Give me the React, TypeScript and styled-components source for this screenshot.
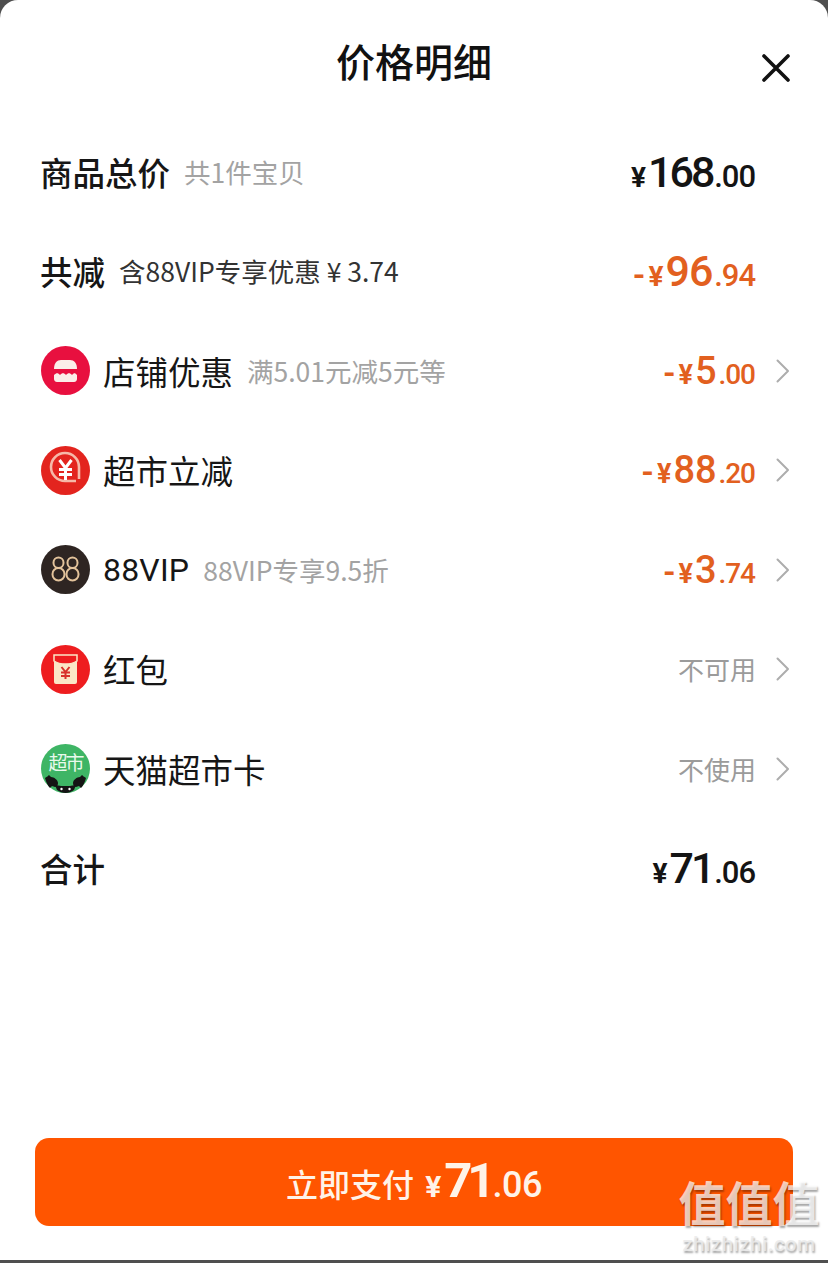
import React from "react";
import styled, { createGlobalStyle } from "styled-components";

const Global = createGlobalStyle`
  html, body { margin: 0; padding: 0; background: #4a4a4a; }
  body { font-family: "Noto Sans CJK SC", "Noto Sans", sans-serif; }
  #root { width: 828px; height: 1263px; overflow: hidden; }
`;

const Page = styled.div`
  width: 828px;
  height: 1263px;
  background: #4f4f4f;
  position: relative;
  overflow: hidden;
`;
const Sheet = styled.div`
  height: 1260px;
  background: #fff;
  border-radius: 18px 18px 0 0;
  display: flex;
  flex-direction: column;
  box-sizing: border-box;
  padding-top: 1px;
`;
const Header = styled.header`
  height: 121px;
  flex: none;
  display: flex;
  justify-content: center;
  padding-top: 31px;
  box-sizing: border-box;
  position: relative;
`;
const Title = styled.h1`
  margin: 0;
  font-size: 39px;
  line-height: 56px;
  font-weight: 500;
  color: #111;
`;
const Close = styled.button`
  position: absolute;
  right: 37px;
  top: 52px;
  width: 30px;
  height: 30px;
  padding: 0;
  border: 0;
  background: none;
  display: block;
`;
const List = styled.div`
  display: flex;
  flex-direction: column;
  flex: none;
`;
const Row = styled.div`
  height: 99.5px;
  flex: none;
  box-sizing: border-box;
  padding: 0 38px 0 40px;
  display: flex;
  align-items: center;
`;
const IconWrap = styled.span`
  width: 49px;
  height: 49px;
  flex: none;
  margin: 0 13px 0 1px;
  display: block;
  svg { display: block; }
`;
const Label = styled.span<{ $bold?: boolean }>`
  font-size: 32.5px;
  line-height: 44px;
  font-weight: ${(p) => (p.$bold ? 500 : 400)};
  color: #161616;
  white-space: nowrap;
`;
const LatinLabel = styled(Label)`
  font-family: "Roboto", "Noto Sans CJK SC", sans-serif;
  font-size: 32px;
  letter-spacing: 0.2px;
`;
const Note = styled.span<{ $dark?: boolean }>`
  font-size: 26.5px;
  line-height: 36px;
  color: ${(p) => (p.$dark ? "#333" : "#a3a3a3")};
  margin-left: 14px;
  white-space: nowrap;
`;
const Right = styled.div`
  margin-left: auto;
  display: flex;
  align-items: center;
  justify-content: flex-end;
`;
const Price = styled.div<{ $accent?: boolean }>`
  width: 200px;
  margin-right: 34px;
  display: flex;
  justify-content: flex-end;
  align-items: baseline;
  font-family: "Roboto", "Open Sans", sans-serif;
  color: ${(p) => (p.$accent ? "#e2601f" : "#141414")};
  white-space: nowrap;
`;
const Minus = styled.span`
  font-size: 32px;
  font-weight: 700;
  margin-right: 3px;
`;
const Sign = styled.span<{ $size: number }>`
  font-size: ${(p) => p.$size}px;
  font-weight: 700;
  margin-right: 2px;
`;
const Main = styled.span<{ $size: number; $tight: number }>`
  font-size: ${(p) => p.$size}px;
  font-weight: 500;
  letter-spacing: ${(p) => p.$tight}px;
`;
const Cents = styled.span<{ $size: number }>`
  font-size: ${(p) => p.$size}px;
  font-weight: 500;
  letter-spacing: -1.1px;
  padding-right: 1.1px;
  margin-left: 2px;
`;
const Status = styled.span`
  font-size: 26px;
  line-height: 36px;
  color: #9b9b9b;
  margin-right: 20px;
`;
const Chevron = styled.svg`
  display: block;
  flex: none;
  width: 14px;
  height: 26px;
`;
const ChevronSlot = styled.span`
  display: block;
  margin-left: -14px;
`;
const Spacer = styled.div`
  flex: 1;
`;
const PayButton = styled.button`
  margin: 0 35px 34px 35px;
  height: 88px;
  flex: none;
  border: 0;
  border-radius: 14px;
  background: #ff5500;
  color: #fff3e8;
  display: flex;
  align-items: baseline;
  justify-content: center;
  padding: 14px 0 0;
  box-sizing: border-box;
  font-family: "Noto Sans CJK SC", sans-serif;
`;
const PayLabel = styled.span`
  font-size: 32px;
  font-weight: 500;
  margin-right: 11px;
`;
const PayNum = styled.span<{ $size: number; $weight: number; $tight?: number; $gap?: number }>`
  font-family: "Roboto", sans-serif;
  font-size: ${(p) => p.$size}px;
  font-weight: ${(p) => p.$weight};
  letter-spacing: ${(p) => p.$tight ?? 0}px;
  margin-left: ${(p) => p.$gap ?? 0}px;
`;
const Watermark = styled.div`
  position: absolute;
  left: 677px;
  top: 1178px;
  width: 144px;
  text-align: center;
  color: rgba(255, 255, 255, 0.72);
  text-shadow: 1px 2px 2px rgba(0, 0, 0, 0.35);
`;
const MarkChars = styled.div`
  font-family: "Roboto", "Noto Sans CJK SC", sans-serif;
  font-size: 47px;
  line-height: 54px;
  font-weight: 700;
  white-space: nowrap;
`;
const MarkUrl = styled.div`
  font-family: "Roboto", sans-serif;
  font-size: 20.5px;
  line-height: 24px;
  letter-spacing: 0.5px;
  font-weight: 500;
  color: rgba(235, 235, 235, 0.85);
`;

const Arrow = () => (
  <Chevron viewBox="0 0 14 26">
    <path d="M1.500 2.500 L12 13 L1.500 23.500" fill="none" stroke="#adadad" strokeWidth="2" strokeLinecap="round" strokeLinejoin="round" />
  </Chevron>
);
const OverlayArrow = () => (
  <ChevronSlot><Arrow /></ChevronSlot>
);

const ShopIcon = () => (
  <svg width="49" height="49" viewBox="0 0 49 49">
    <circle cx="24.5" cy="24.5" r="24.5" fill="#e8103f" />
    <path d="M13 23c0-6 3-9 7-9h9c4 0 7 3 7 9z" fill="#fbeee9" />
    <path d="M13 29c2.500-2.500 4-2.500 6 0 2-2.500 4-2.500 6 0 2-2.500 4-2.500 6 0 2-2.500 3-2.500 5 0v4c0 1.500-1 3-3 3H16c-2 0-3-1.500-3-3z" fill="#fbeee9" />
  </svg>
);
const CutIcon = () => (
  <svg width="49" height="49" viewBox="0 0 49 49">
    <circle cx="24.5" cy="24.5" r="24.5" fill="#e3241e" />
    <path d="M35 35H24a14 14 0 1 1 14-14v12" fill="none" stroke="#f6b8a8" strokeWidth="2.600" />
    <path d="M18.500 14l6 8 6-8M18 23.500h13M18 28.500h13M24.500 22v12" fill="none" stroke="#fff" strokeWidth="3" />
  </svg>
);
const VipIcon = () => (
  <svg width="49" height="49" viewBox="0 0 49 49">
    <circle cx="24.5" cy="24.5" r="24.5" fill="#2e2522" />
    <g fill="none" stroke="#e3c39b" strokeWidth="2">
      <rect x="12.500" y="12.500" width="10" height="10.500" rx="5" />
      <rect x="11.500" y="23" width="12" height="12.500" rx="6" />
      <rect x="26.500" y="12.500" width="10" height="10.500" rx="5" />
      <rect x="25.500" y="23" width="12" height="12.500" rx="6" />
    </g>
  </svg>
);
const PacketIcon = () => (
  <svg width="49" height="49" viewBox="0 0 49 49">
    <circle cx="24.5" cy="24.5" r="24.5" fill="#ee1d1f" />
    <path d="M13 10h23v27a2 2 0 0 1-2 2H15a2 2 0 0 1-2-2z" fill="#fbe7c6" />
    <path d="M13 10h23v6c-6 4-17 4-23 0z" fill="#ee1d1f" stroke="#fbe7c6" strokeWidth="1.500" />
    <path d="M20.500 22l4 5 4-5M20 27.500h9M20 31h9M24.500 27v7" fill="none" stroke="#d8322a" strokeWidth="2" />
  </svg>
);
const CardIcon = () => (
  <svg width="49" height="49" viewBox="0 0 49 49">
    <circle cx="24.5" cy="24.5" r="24.5" fill="#3eb565" />
    <text x="24.5" y="26" textAnchor="middle" fontSize="19" letterSpacing="-2" fill="#e9f9ec" fontFamily="Noto Sans CJK SC, sans-serif">超市</text>
    <path d="M4 34c2-1 4-3 4-3l2 2c3 0 7 3 7 6 0 2-1 4-3 4l-3-1-2 2c-2-2-4-6-5-10z" fill="#141414" />
    <path d="M45 34c-2-1-4-3-4-3l-2 2c-3 0-7 3-7 6 0 2 1 4 3 4l3-1 2 2c2-2 4-6 5-10z" fill="#141414" />
    <path d="M14 41c2 0 5 1 6 1h9c1 0 4-1 6-1l-2 5c-3 2-5 3-8.500 3s-5.500-1-8.500-3z" fill="#141414" />
    <circle cx="20.500" cy="45" r="1.200" fill="#fff" />
    <circle cx="28.500" cy="45" r="1.200" fill="#fff" />
  </svg>
);

type MoneyProps = { minus?: boolean; main: string; cents: string; accent?: boolean; big?: boolean; tight?: number };
const Money = ({ minus, main, cents, accent, big, tight = 0 }: MoneyProps) => (
  <Price $accent={accent}>
    {minus && <Minus>-</Minus>}
    <Sign $size={big ? 28 : 27}>¥</Sign>
    <Main $size={big ? 43 : 38} $tight={tight}>{main}</Main>
    <Cents $size={big ? 31 : 28}>.{cents}</Cents>
  </Price>
);

export default function App() {
  return (
    <Page>
      <Global />
      <Sheet>
        <Header>
          <Title>价格明细</Title>
          <Close aria-label="关闭">
            <svg width="30" height="30" viewBox="0 0 30 30">
              <path d="M3 3 L27 27 M27 3 L3 27" stroke="#111" strokeWidth="3.600" strokeLinecap="round" />
            </svg>
          </Close>
        </Header>
        <List>
          <Row>
            <Label $bold>商品总价</Label>
            <Note>共1件宝贝</Note>
            <Right><Money main="168" cents="00" big tight={-3} /></Right>
          </Row>
          <Row>
            <Label $bold>共减</Label>
            <Note $dark>含88VIP专享优惠 ¥ 3.74</Note>
            <Right><Money minus main="96" cents="94" accent big tight={-1} /></Right>
          </Row>
          <Row>
            <IconWrap><ShopIcon /></IconWrap>
            <Label>店铺优惠</Label>
            <Note>满5.01元减5元等</Note>
            <Right><Money minus main="5" cents="00" accent /><OverlayArrow /></Right>
          </Row>
          <Row>
            <IconWrap><CutIcon /></IconWrap>
            <Label>超市立减</Label>
            <Right><Money minus main="88" cents="20" accent /><OverlayArrow /></Right>
          </Row>
          <Row>
            <IconWrap><VipIcon /></IconWrap>
            <LatinLabel>88VIP</LatinLabel>
            <Note>88VIP专享9.5折</Note>
            <Right><Money minus main="3" cents="74" accent /><OverlayArrow /></Right>
          </Row>
          <Row>
            <IconWrap><PacketIcon /></IconWrap>
            <Label>红包</Label>
            <Right><Status>不可用</Status><Arrow /></Right>
          </Row>
          <Row>
            <IconWrap><CardIcon /></IconWrap>
            <Label>天猫超市卡</Label>
            <Right><Status>不使用</Status><Arrow /></Right>
          </Row>
          <Row>
            <Label $bold>合计</Label>
            <Right><Money main="71" cents="06" big tight={-3} /></Right>
          </Row>
        </List>
        <Spacer />
        <PayButton>
          <PayLabel>立即支付</PayLabel>
          <PayNum $size={30} $weight={700}>¥</PayNum>
          <PayNum $size={49} $weight={700} $tight={-5} $gap={3}>71</PayNum>
          <PayNum $size={36} $weight={500} $tight={-0.5} $gap={2}>.06</PayNum>
        </PayButton>
      </Sheet>
      <Watermark>
        <MarkChars>值值值</MarkChars>
        <MarkUrl>zhizhizhi.com</MarkUrl>
      </Watermark>
    </Page>
  );
}
